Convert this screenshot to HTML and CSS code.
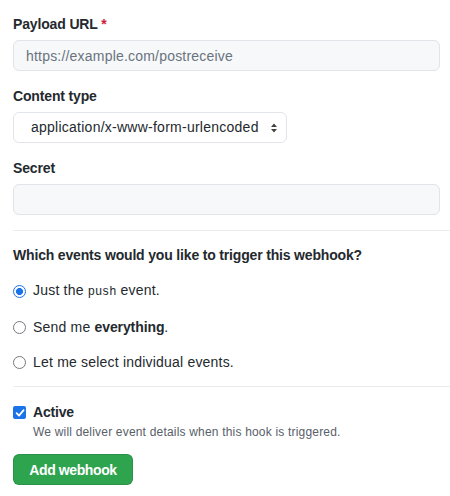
FILE: index.html
```html
<!DOCTYPE html>
<html>
<head>
<meta charset="utf-8">
<link rel="stylesheet" href="styles.css">
</head>
<body>
<form class="hook-form">
  <div class="form-group">
    <label class="label">Payload URL <span class="req">*</span></label>
    <input class="form-control" type="text" placeholder="https://example.com/postreceive">
  </div>
  <div class="form-group">
    <label class="label">Content type</label>
    <div class="select-wrap">
      <span class="select-text">application/x-www-form-urlencoded</span>
      <svg class="select-arrow" width="8" height="12" viewBox="0 0 8 12"><path d="M4 1.5 L7 5 H1 Z M4 10.5 L1 7 H7 Z" fill="#444"/></svg>
    </div>
  </div>
  <div class="form-group">
    <label class="label">Secret</label>
    <input class="form-control" type="text">
  </div>
  <hr class="divider">
  <div class="label heading">Which events would you like to trigger this webhook?</div>
  <div class="radios">
    <label class="radio-row"><span class="radio checked"></span><span>Just the <code>push</code> event.</span></label>
    <label class="radio-row"><span class="radio"></span><span>Send me <strong>everything</strong>.</span></label>
    <label class="radio-row"><span class="radio"></span><span>Let me select individual events.</span></label>
  </div>
  <hr class="divider second">
  <div class="check-row">
    <span class="checkbox"><svg width="10" height="10" viewBox="0 0 10 10"><path d="M1.6 5.2 L4 7.6 L8.6 2.2" stroke="#fff" stroke-width="1.8" fill="none" stroke-linecap="round" stroke-linejoin="round"/></svg></span>
    <div>
      <div class="check-label">Active</div>
      <div class="note">We will deliver event details when this hook is triggered.</div>
    </div>
  </div>
  <button class="btn" type="button">Add webhook</button>
</form>
</body>
</html>
```

FILE: styles.css
```css
* { box-sizing: border-box; }
html, body { margin: 0; padding: 0; background: #fff; }
body {
  font-family: "Liberation Sans", Arial, sans-serif;
  font-size: 14px;
  line-height: 21px;
  color: #24292e;
  letter-spacing: 0.2px;
}
.hook-form {
  padding: 14px 10px 0 13px;
  display: flex;
  flex-direction: column;
}
.form-group { display: flex; flex-direction: column; margin-bottom: 15px; }
.label { font-weight: 700; display: block; margin-bottom: 5px; letter-spacing: -0.15px; }
.req { color: #cb2431; }
.form-control {
  width: 427px;
  height: 31px;
  padding: 5px 12px;
  font: inherit;
  font-size: 14px;
  letter-spacing: 0.2px;
  color: #24292e;
  background: #f6f8fa;
  border: 1px solid #e1e4e8;
  border-radius: 6px;
  outline: none;
}
.form-control::placeholder { color: #6a737d; }
.select-wrap {
  width: 274px;
  height: 31px;
  border: 1px solid #e1e4e8;
  border-radius: 6px;
  background: #fff;
  display: flex;
  align-items: center;
  padding: 0 8px 0 17px;
  justify-content: space-between;
}
.select-text { font-size: 14px; letter-spacing: 0.25px; }
.divider {
  border: 0;
  height: 1px;
  background: #eaecef;
  margin: 0 -10px 14px 0;
}
.divider.second { margin-top: 13px; margin-bottom: 15px; }
.heading { margin-bottom: 14px; letter-spacing: -0.17px; }
.radios { display: flex; flex-direction: column; gap: 14px; }
.radio-row { display: flex; align-items: center; gap: 7px; }
.radio {
  width: 13px; height: 13px;
  border-radius: 50%;
  border: 1.5px solid #7a7680;
  flex: none;
}
.radio.checked {
  border: 1.5px solid #1a73e8;
  background: radial-gradient(circle, #1a73e8 0 3.2px, #fff 3.8px);
}
code {
  font-family: "Liberation Mono", monospace;
  font-size: 12px;
  letter-spacing: 0;
}
strong { font-weight: 700; letter-spacing: -0.1px; }
.check-row { display: flex; align-items: flex-start; gap: 7px; }
.checkbox {
  width: 13px; height: 13px;
  margin-top: 4px;
  background: #1a73e8;
  border-radius: 2px;
  display: flex; align-items: center; justify-content: center;
  flex: none;
}
.check-label { font-weight: 700; letter-spacing: -0.2px; }
.note { font-size: 12px; line-height: 18px; color: #586069; letter-spacing: 0.19px; }
.btn {
  margin-top: 13px;
  align-self: flex-start;
  width: 120px;
  height: 31px;
  background: #2ea44f;
  color: #fff;
  border: 1px solid rgba(27,31,35,0.15);
  border-radius: 6px;
  font-family: inherit;
  font-size: 14px;
  font-weight: 700;
  letter-spacing: -0.4px;
  padding: 0;
}
```
